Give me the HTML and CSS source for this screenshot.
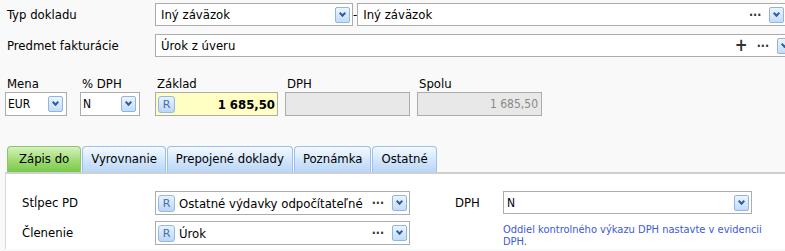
FILE: index.html
```html
<!DOCTYPE html>
<html lang="sk">
<head>
    <meta charset="UTF-8">
    <title>Doklad</title>
    <link rel="stylesheet" href="styles.css">
</head>
<body>
    <div class="top">
        <div class="row">
            <div class="label">Typ dokladu</div>
            <div class="field w-typ">
                <span class="value">Iný záväzok</span>
                <span class="drop"></span>
            </div>
            <span class="dash">-</span>
            <div class="field w-wide">
                <span class="value">Iný záväzok</span>
                <span class="dots">···</span>
                <span class="drop"></span>
            </div>
        </div>
        <div class="row">
            <div class="label">Predmet fakturácie</div>
            <div class="field w-full">
                <span class="value">Úrok z úveru</span>
                <span class="plus">+</span>
                <span class="dots">···</span>
                <span class="drop"></span>
            </div>
        </div>
    </div>

    <div class="amounts">
        <div class="col c-mena">
            <div class="cap">Mena</div>
            <div class="field tall"><span class="value small">EUR</span><span class="drop"></span></div>
        </div>
        <div class="col c-dph">
            <div class="cap">% DPH</div>
            <div class="field tall"><span class="value small">N</span><span class="drop"></span></div>
        </div>
        <div class="col c-zaklad">
            <div class="cap">Základ</div>
            <div class="field tall yellow"><span class="rbtn">R</span><span class="num bold">1 685,50</span></div>
        </div>
        <div class="col c-sum">
            <div class="cap">DPH</div>
            <div class="field tall off"></div>
        </div>
        <div class="col c-sum">
            <div class="cap">Spolu</div>
            <div class="field tall off"><span class="num grey">1 685,50</span></div>
        </div>
    </div>

    <div class="tabs">
        <div class="tab active">Zápis do</div>
        <div class="tab">Vyrovnanie</div>
        <div class="tab">Prepojené doklady</div>
        <div class="tab">Poznámka</div>
        <div class="tab">Ostatné</div>
    </div>

    <div class="panel">
        <div class="prow">
            <div class="plabel">Stĺpec PD</div>
            <div class="field w-pd">
                <span class="rbtn">R</span>
                <span class="value clip">Ostatné výdavky odpočítateľné</span>
                <span class="dots">···</span>
                <span class="drop"></span>
            </div>
            <div class="plabel2">DPH</div>
            <div class="field w-vat">
                <span class="value small">N</span>
                <span class="drop"></span>
            </div>
        </div>
        <div class="prow">
            <div class="plabel">Členenie</div>
            <div class="field w-pd">
                <span class="rbtn">R</span>
                <span class="value clip">Úrok</span>
                <span class="dots">···</span>
                <span class="drop"></span>
            </div>
            <div class="note">Oddiel kontrolného výkazu DPH nastavte v evidencii DPH.</div>
        </div>
    </div>
</body>
</html>
```

FILE: styles.css
```css
body {
    margin: 0;
    background: #f9f9f9;
    font-family: "DejaVu Sans Condensed", "DejaVu Sans", sans-serif;
    font-size: 13px;
    color: #000;
    overflow: hidden;
    width: 785px;
    height: 251px;
}
.top {
    padding: 3px 0 0 7px;
}
.row {
    display: flex;
    align-items: center;
    height: 23px;
    margin-bottom: 8px;
}
.label {
    width: 148px;
    flex-shrink: 0;
}
.field {
    display: flex;
    align-items: center;
    box-sizing: border-box;
    height: 23px;
    border: 1px solid #acacac;
    background: #fff;
    flex-shrink: 0;
    padding: 0 2px 0 5px;
}
.value {
    flex: 1;
    white-space: nowrap;
    overflow: hidden;
}
.value.small {
    font-size: 12px;
}
.w-typ {
    width: 198px;
}
.dash {
    width: 10px;
    text-align: center;
}
.w-wide {
    width: 430px;
}
.w-full {
    width: 640px;
}
.dots {
    font-size: 12px;
    margin-right: 8px;
    color: #333;
    font-weight: bold;
}
.plus {
    font-size: 17px;
    font-weight: bold;
    margin-right: 9px;
    color: #333;
    line-height: 1;
}
.drop {
    width: 15px;
    height: 16px;
    box-sizing: border-box;
    border: 1px solid #8db5e6;
    border-radius: 2px;
    background: linear-gradient(#eef5fd, #c4dcf6);
    position: relative;
    flex-shrink: 0;
}
.drop::after {
    content: "";
    position: absolute;
    left: 4px;
    top: 3px;
    width: 3px;
    height: 3px;
    border-right: 2px solid #2a5ea8;
    border-bottom: 2px solid #2a5ea8;
    transform: rotate(45deg);
}

.amounts {
    display: flex;
    padding: 10px 0 0 5px;
}
.col {
    display: flex;
    flex-direction: column;
}
.cap {
    padding-left: 2px;
    height: 17px;
    line-height: 17px;
}
.field.tall {
    height: 24px;
}
.c-mena {
    width: 62px;
    margin-right: 13px;
}
.c-dph {
    width: 60px;
    margin-right: 15px;
}
.c-zaklad {
    width: 123px;
    margin-right: 7px;
}
.c-sum {
    width: 125px;
    margin-right: 7px;
}
.c-mena .field, .c-dph .field {
    padding-left: 2px;
    padding-right: 3px;
}
.yellow {
    background: #ffffc4;
    padding: 0 2px 0 2px;
}
.off {
    background: #e8e8e8;
    padding-right: 3px;
}
.rbtn {
    width: 17px;
    height: 17px;
    box-sizing: border-box;
    border: 1px solid #92b9e8;
    border-radius: 3px;
    background: linear-gradient(#e9f2fc, #bcd6f4);
    color: #3d6fb3;
    font-family: "DejaVu Sans", sans-serif;
    font-size: 11px;
    line-height: 15px;
    text-align: center;
    flex-shrink: 0;
    margin-right: 4px;
}
.num {
    flex: 1;
    text-align: right;
}
.bold {
    font-weight: bold;
}
.grey {
    color: #888;
    font-size: 12px;
}

.tabs {
    display: flex;
    gap: 1px;
    padding: 30px 0 0 7px;
    height: 26px;
    box-sizing: content-box;
}
.tab {
    box-sizing: border-box;
    height: 26px;
    line-height: 24px;
    padding: 0 8px;
    border: 1px solid #9ac0ec;
    border-bottom: none;
    border-radius: 4px 4px 0 0;
    background: linear-gradient(#f4f9ff, #cfe3fb 60%, #b9d6f8);
}
.tab.active {
    border-color: #8cc86a;
    background: linear-gradient(#d6f2bf, #9edb72 55%, #79c94a);
    padding: 0 11px;
}
.panel {
    margin-left: 5px;
    background: #fff;
    border-top: 2px solid #cfcfcf;
    border-left: 1px solid #d8d8d8;
    padding: 17px 0 0 16px;
    height: 58px;
    overflow: hidden;
}
.prow {
    display: flex;
    align-items: flex-start;
    height: 24px;
    margin-bottom: 6px;
}
.plabel {
    width: 133px;
    line-height: 24px;
    flex-shrink: 0;
}
.w-pd {
    width: 255px;
    height: 24px;
    padding-left: 2px;
}
.plabel2 {
    width: 48px;
    margin-left: 45px;
    line-height: 23px;
    flex-shrink: 0;
}
.w-vat {
    width: 249px;
    padding-left: 3px;
}
.note {
    margin-left: 93px;
    width: 290px;
    font-size: 11px;
    line-height: 12px;
    color: #4157d6;
    padding-top: 3px;
}
```
